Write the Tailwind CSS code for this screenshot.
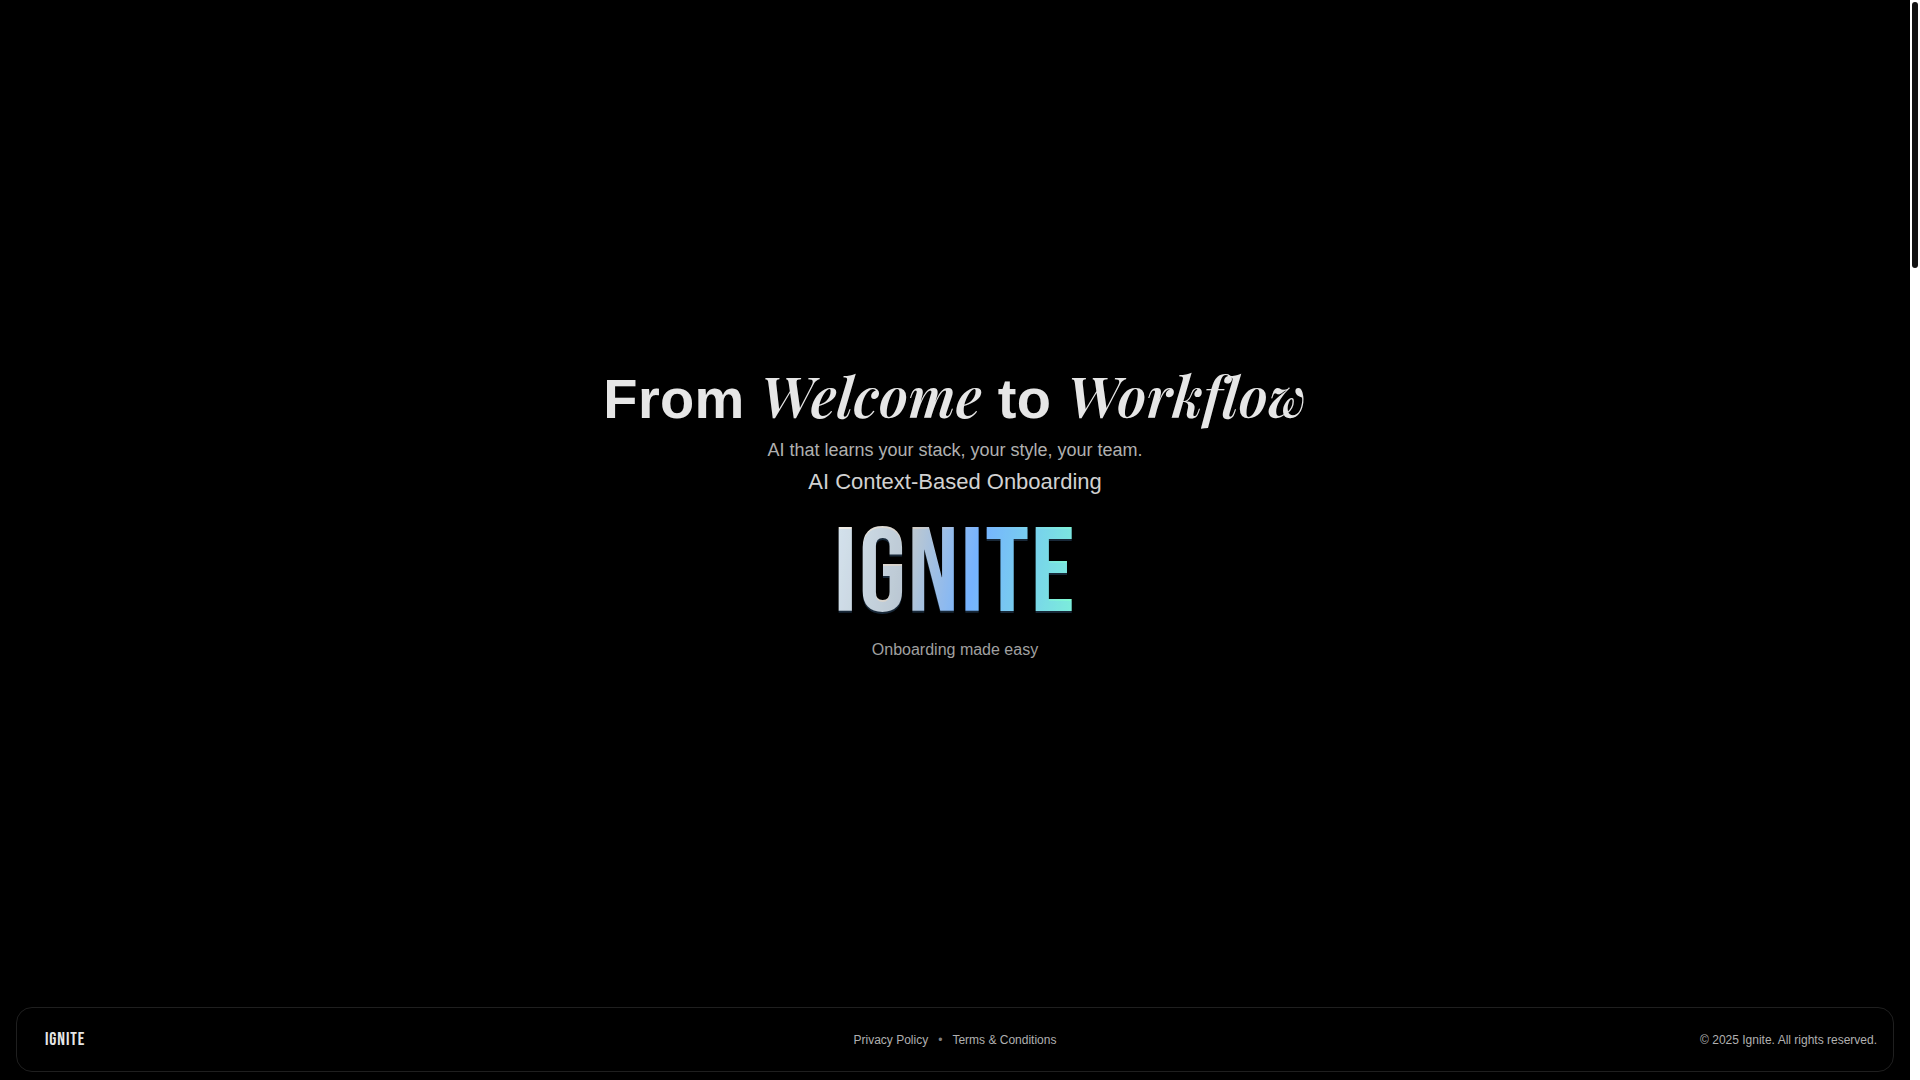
<!DOCTYPE html>
<html lang="en">
<head>
  <meta charset="UTF-8">
  <meta name="viewport" content="width=device-width, initial-scale=1.0">
  <title>Ignite</title>
  <script src="https://cdn.jsdelivr.net/npm/@tailwindcss/browser@4"></script>
</head>
<body class="bg-black flex h-screen overflow-hidden font-['Liberation_Sans',sans-serif]">

  <div class="flex-1 flex flex-col px-4 pb-2">
    <!-- Hero -->
    <main class="flex-1 flex flex-col items-center justify-center text-center pt-5">
      <h1 class="text-[56px] leading-[68px] font-bold text-[#e6e6e6] tracking-[0.006em]">
        From <em class="font-['Playfair_Display',serif] font-semibold leading-[60px]">Welcome</em>
        to <em class="font-['Playfair_Display',serif] font-semibold leading-[60px]">Workflow</em>
      </h1>
      <p class="mt-1 text-lg leading-[26px] text-[#b0b0b0]">AI that learns your stack, your style, your team.</p>
      <p class="text-[22px] leading-[38px] text-[#d1d1d1]">AI Context-Based Onboarding</p>
      <h2 class="mt-[11px] text-[120px] leading-[126px] font-normal tracking-[0.015em] font-['Bebas_Neue',sans-serif] text-transparent bg-clip-text bg-[linear-gradient(100deg,#f4f1ea_0%,#d0ccc6_32%,#78b2ff_57%,#80ffd0_98%)] [text-shadow:0_2px_0_rgba(110,180,255,0.22)]">IGNITE</h2>
      <p class="text-base leading-6 text-[#a0a0a0]">Onboarding made easy</p>
    </main>

    <!-- Footer -->
    <footer class="grid grid-cols-3 items-center h-[65px] px-4 border border-[#1f1f1f] rounded-2xl text-xs text-[#b0b0b0]">
      <a href="#" class="pl-3 text-lg font-normal tracking-[0.05em] font-['Bebas_Neue',sans-serif] text-[#e6e6e6]">IGNITE</a>
      <nav class="flex items-center justify-center gap-[10px]">
        <a href="#">Privacy Policy</a>
        <span class="text-[#808080]">•</span>
        <a href="#">Terms &amp; Conditions</a>
      </nav>
      <p class="text-right">© 2025 Ignite. All rights reserved.</p>
    </footer>
  </div>

  <!-- Scroll track -->
  <div class="w-[10px] bg-white p-[2px]">
    <div class="h-[266px] w-[6px] rounded-full bg-[#111111]"></div>
  </div>

</body>
</html>
